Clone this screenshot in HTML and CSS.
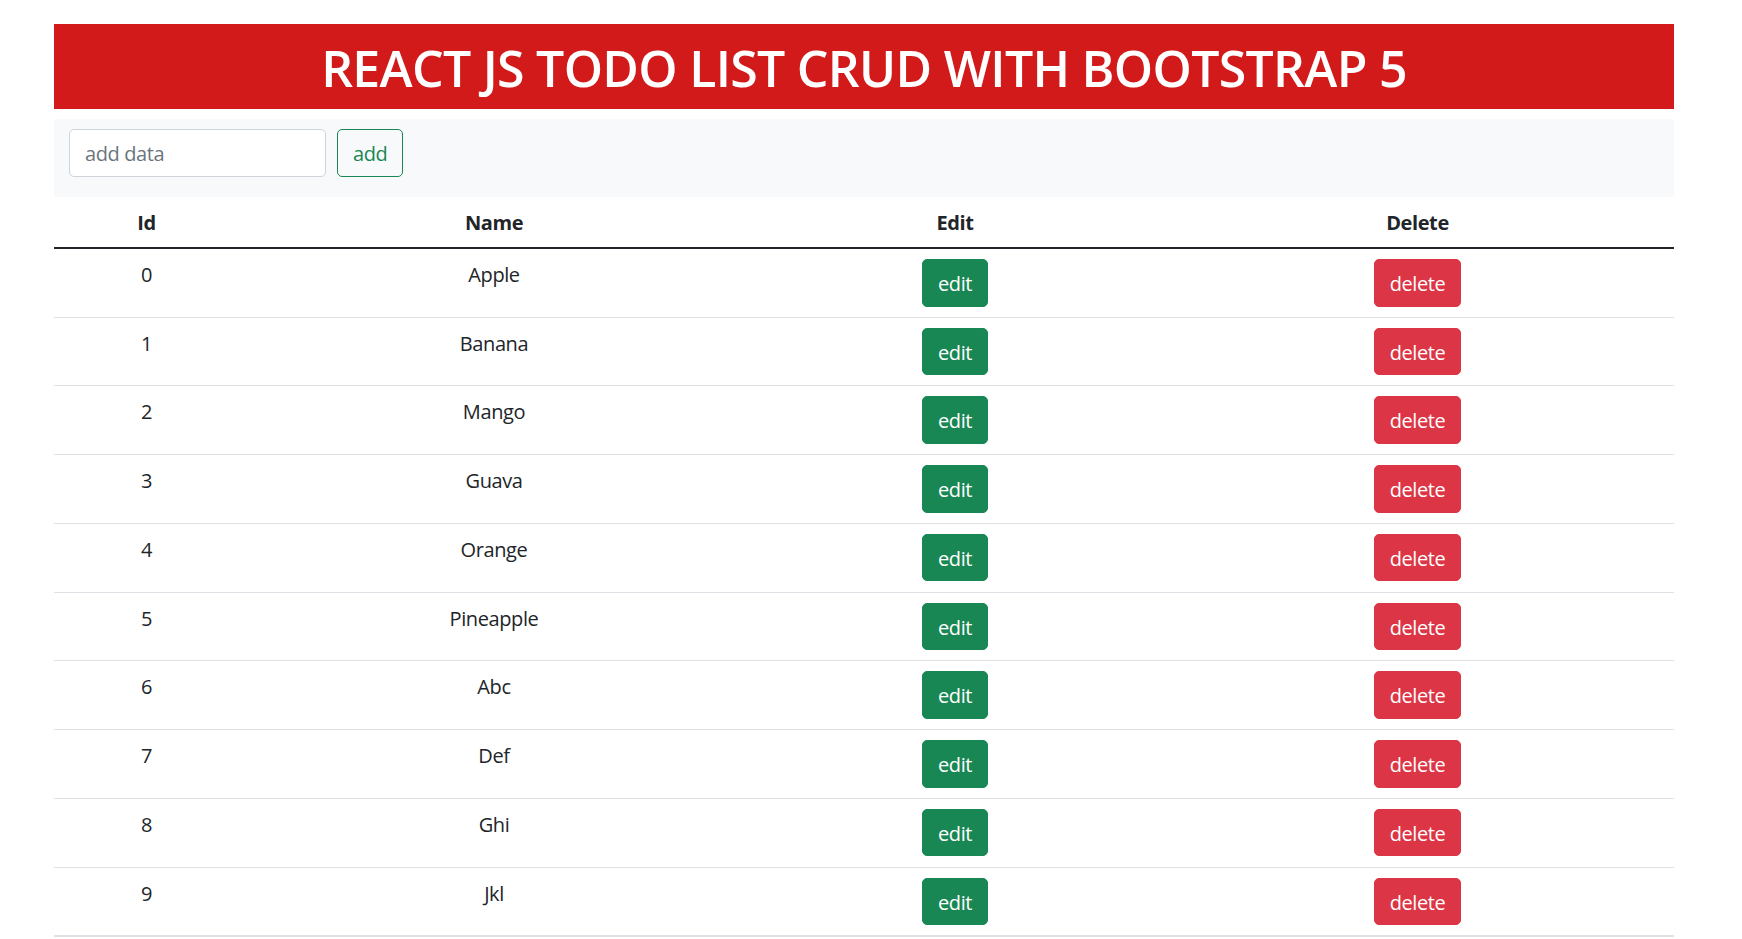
FILE: index.html
```
<!DOCTYPE html>
<html lang="en">
<head>
<meta charset="utf-8">
<title>React JS Todo List CRUD</title>
<link rel="stylesheet" href="styles.css">
</head>
<body>
<div class="container">
  <h1 class="title">REACT JS TODO LIST CRUD WITH BOOTSTRAP 5</h1>
  <div class="add-bar">
    <input class="add-input" type="text" placeholder="add data">
    <button class="btn btn-outline-success">add</button>
  </div>
  <table class="todo-table">
    <thead>
      <tr>
        <th class="col-id">Id</th>
        <th class="col-name">Name</th>
        <th class="col-edit">Edit</th>
        <th class="col-delete">Delete</th>
      </tr>
    </thead>
    <tbody>
      <tr><td>0</td><td>Apple</td><td><button class="btn btn-success">edit</button></td><td><button class="btn btn-danger">delete</button></td></tr>
      <tr><td>1</td><td>Banana</td><td><button class="btn btn-success">edit</button></td><td><button class="btn btn-danger">delete</button></td></tr>
      <tr><td>2</td><td>Mango</td><td><button class="btn btn-success">edit</button></td><td><button class="btn btn-danger">delete</button></td></tr>
      <tr><td>3</td><td>Guava</td><td><button class="btn btn-success">edit</button></td><td><button class="btn btn-danger">delete</button></td></tr>
      <tr><td>4</td><td>Orange</td><td><button class="btn btn-success">edit</button></td><td><button class="btn btn-danger">delete</button></td></tr>
      <tr><td>5</td><td>Pineapple</td><td><button class="btn btn-success">edit</button></td><td><button class="btn btn-danger">delete</button></td></tr>
      <tr><td>6</td><td>Abc</td><td><button class="btn btn-success">edit</button></td><td><button class="btn btn-danger">delete</button></td></tr>
      <tr><td>7</td><td>Def</td><td><button class="btn btn-success">edit</button></td><td><button class="btn btn-danger">delete</button></td></tr>
      <tr><td>8</td><td>Ghi</td><td><button class="btn btn-success">edit</button></td><td><button class="btn btn-danger">delete</button></td></tr>
      <tr><td>9</td><td>Jkl</td><td><button class="btn btn-success">edit</button></td><td><button class="btn btn-danger">delete</button></td></tr>
    </tbody>
  </table>
</div>
</body>
</html>
```
FILE: styles.css
```
* { box-sizing: border-box; }
html, body { margin: 0; padding: 0; background: #fff; }
body {
  font-family: "Open Sans", "Noto Sans", "Liberation Sans", sans-serif;
  font-size: 20px;
  line-height: 1.5;
  letter-spacing: -0.4px;
  color: #212529;
  overflow: hidden;
}
.container {
  width: 1620px;
  margin: 24px 0 0 54px;
}
.title {
  margin: 0;
  background: #d21a1a;
  color: #fff;
  text-align: center;
  font-size: 50px;
  font-weight: 600;
  line-height: 60px;
  letter-spacing: -0.7px;
  padding: 14px 0 11px;
  height: 85px;
}
.add-bar {
  margin-top: 10px;
  background: #f8f9fa;
  height: 78px;
  padding: 10px 15px 0 15px;
  display: flex;
  align-items: flex-start;
  gap: 11px;
}
.add-input {
  width: 257px;
  height: 47.5px;
  border: 1px solid #ced4da;
  border-radius: 5px;
  background: #fff;
  padding: 2px 15px 0;
  font-family: inherit;
  font-size: 20px;
  letter-spacing: -0.4px;
  color: #212529;
  outline: none;
}
.add-input::placeholder { color: #6c757d; }
.btn {
  display: inline-block;
  height: 47.5px;
  padding: 1px 15px 0;
  border: 1px solid transparent;
  border-radius: 5px;
  font-family: inherit;
  font-size: 20px;
  letter-spacing: -0.4px;
  line-height: 45px;
  vertical-align: top;
  cursor: pointer;
}
.btn-outline-success { background: transparent; color: #198754; border-color: #198754; }
.btn-success { background: #198754; color: #fff; border-color: #198754; }
.btn-danger { background: #dc3545; color: #fff; border-color: #dc3545; }
.todo-table {
  width: 100%;
  border-collapse: collapse;
  table-layout: fixed;
  vertical-align: top;
}
.todo-table th, .todo-table td {
  text-align: center;
  padding: 10px;
  vertical-align: top;
}
.todo-table th {
  font-weight: 700;
  line-height: 30px;
  padding-top: 11px;
  padding-bottom: 9px;
  border-bottom: 2px solid #212529;
}
.todo-table td {
  line-height: 31px;
  height: 68.75px;
  border-bottom: 1px solid #dee2e6;
}
.todo-table tbody tr:last-child td { border-bottom: 2px solid #dee2e6; }
.col-id { width: 185px; }
.col-name { width: 510px; }
.col-edit { width: 412px; }
.col-delete { width: 513px; }
```
